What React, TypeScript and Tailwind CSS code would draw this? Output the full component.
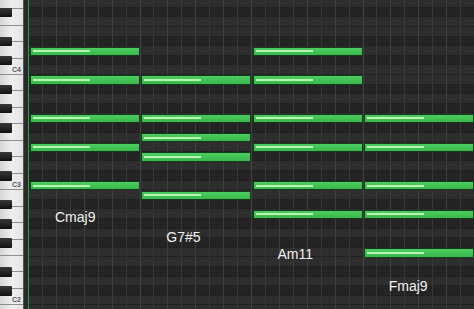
import React from 'react';

const ROW = 9.6;
const TOP_MIDI = 71; // B4 is the top row of the first octave block
const Y0 = -40.2;
const BAR = 111.25;

const BLACK_ROWS = [1, 3, 5, 8, 10]; // rows from the top of an octave (B=0)

const rowTop = (midi: number) => Y0 + (TOP_MIDI - midi) * ROW;

const chords = [
  { name: 'Cmaj9', notes: [48, 52, 55, 59, 62], labelTop: 209 },
  { name: 'G7#5', notes: [47, 51, 53, 55, 59], labelTop: 229 },
  { name: 'Am11', notes: [45, 48, 52, 55, 59, 62], labelTop: 246 },
  { name: 'Fmaj9', notes: [41, 45, 48, 52, 55], labelTop: 278 },
];

const octaves = [4, 3, 2, 1];

const PianoOctave: React.FC<{ octave: number }> = ({ octave }) => (
  <div className="relative h-[115.2px] shrink-0">
    <div className="flex flex-col h-full">
      {Array.from({ length: 7 }).map((_, i) => (
        <div
          key={i}
          className="flex-1 border-b border-[#8e8e8e] bg-gradient-to-r from-[#d6d6d6] via-[#eeeeee] to-[#e4e4e4]"
        />
      ))}
    </div>
    {BLACK_ROWS.map((r) => (
      <div
        key={r}
        className="absolute left-0 w-[12px] h-[9.6px] rounded-r-[1px] bg-gradient-to-b from-[#3a3a3a] to-[#111]"
        style={{ top: r * ROW }}
      />
    ))}
    {octave > 1 && (
      <span className="absolute bottom-[2px] right-[2px] text-[7px] leading-none font-bold text-[#5a5a5a] font-['Liberation_Sans',sans-serif]">
        C{octave}
      </span>
    )}
  </div>
);

const GridOctave: React.FC = () => (
  <div className="flex flex-col h-[115.2px] shrink-0">
    {Array.from({ length: 12 }).map((_, i) => (
      <div
        key={i}
        className={`h-[9.6px] shrink-0 border-b border-[#202020] ${
          BLACK_ROWS.includes(i) ? 'bg-[#242424]' : 'bg-[#2e2e2e]'
        }`}
      />
    ))}
  </div>
);

export default function App() {
  return (
    <div className="w-[474px] h-[309px] overflow-hidden flex bg-[#2b2b2b] font-['Liberation_Sans',Arial,sans-serif]">
      {/* Keyboard */}
      <div className="w-[23px] h-full overflow-hidden shrink-0">
        <div className="flex flex-col mt-[-40.2px]">
          {octaves.map((o) => (
            <PianoOctave key={o} octave={o} />
          ))}
        </div>
      </div>
      <div className="w-[5px] h-full bg-[#2a2a2a] border-l border-[#555] shrink-0" />
      <div className="w-px h-full bg-[#2f9a4c] shrink-0" />

      {/* Roll */}
      <div className="relative flex-1 h-full overflow-hidden">
        <div className="flex flex-col mt-[-40.2px]">
          {octaves.map((o) => (
            <GridOctave key={o} />
          ))}
        </div>

        {/* vertical lines */}
        <div className="absolute inset-0 flex">
          {chords.map((c, b) => (
            <div key={b} className="flex-1 flex border-l border-[#444] first:border-l-0">
              {Array.from({ length: 8 }).map((_, s) => (
                <div
                  key={s}
                  className={`flex-1 ${
                    s === 0 ? '' : s % 2 === 0 ? 'border-l border-[#3f3f3f]' : 'border-l border-[#373737]'
                  }`}
                />
              ))}
            </div>
          ))}
        </div>

        {/* notes */}
        {chords.map((c, b) =>
          c.notes.map((m) => (
            <div
              key={`${b}-${m}`}
              className="absolute h-[9.5px] w-[110px] border border-[#153a1d] bg-gradient-to-b from-[#4ccd5f] to-[#38b84b]"
              style={{ top: rowTop(m) + 0.3, left: b * BAR + 1 }}
            >
              <div className="absolute left-[2px] top-[2.7px] h-[2px] w-[57px] bg-[#b9f4b4]" />
            </div>
          ))
        )}

        {/* chord names */}
        {chords.map((c, b) => (
          <span
            key={c.name}
            className="absolute text-[14px] leading-4 text-[#f2f2f2]"
            style={{ top: c.labelTop, left: b * BAR + 26 }}
          >
            {c.name}
          </span>
        ))}
      </div>
    </div>
  );
}
